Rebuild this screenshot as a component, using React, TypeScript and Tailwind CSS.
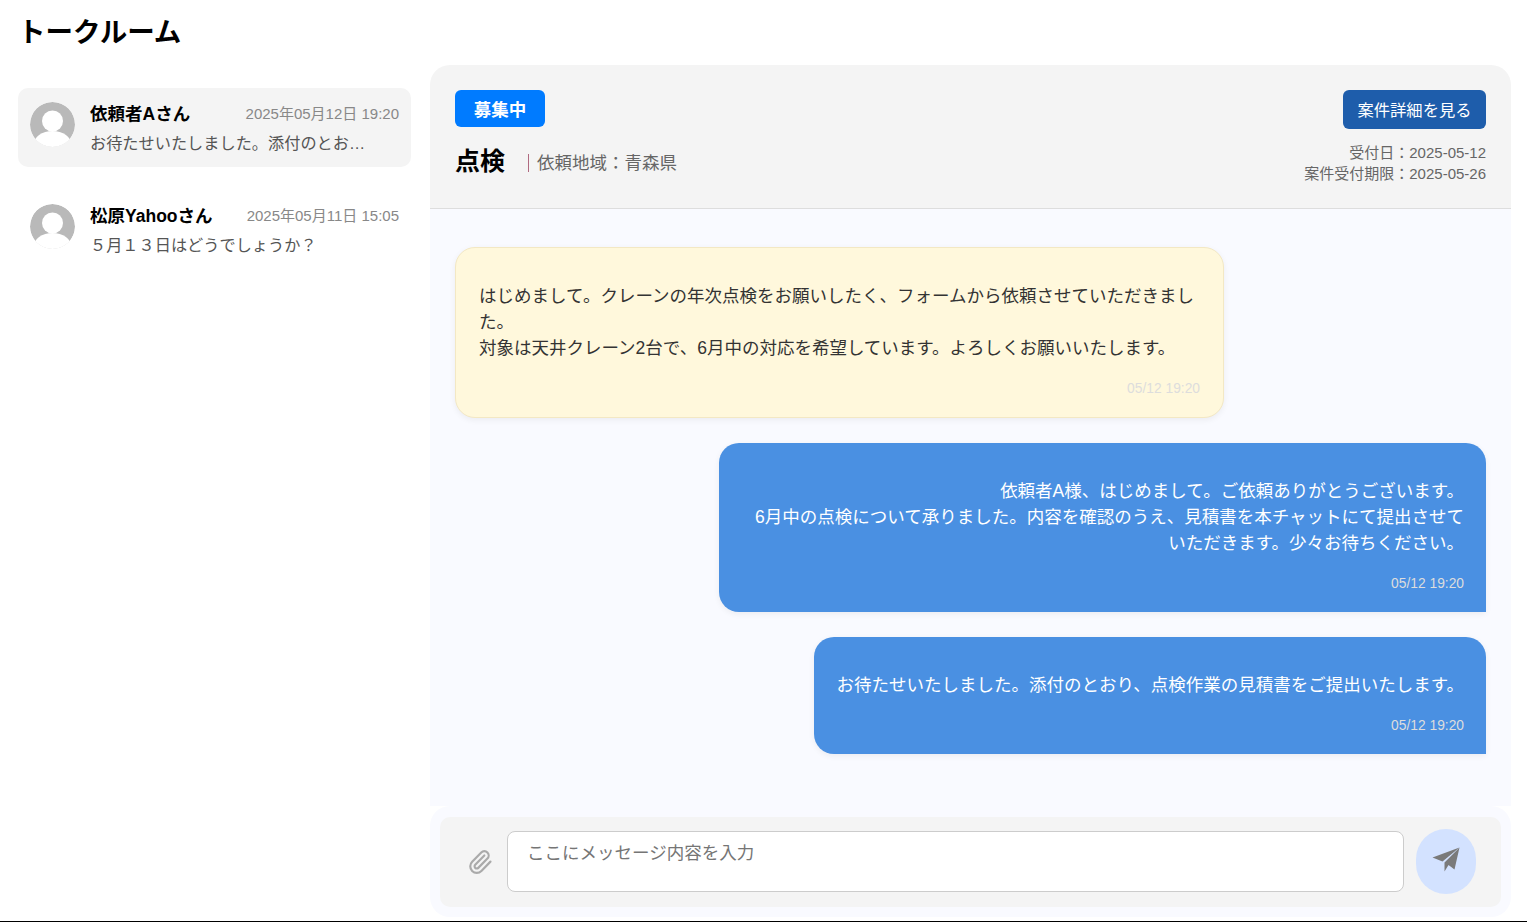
import React from 'react';
import { Paperclip } from 'lucide-react';

const rooms = [
  { name: '依頼者Aさん', date: '2025年05月12日 19:20', last: 'お待たせいたしました。添付のとおり、点検作業の見積書をご提出いたします。', active: true },
  { name: '松原Yahooさん', date: '2025年05月11日 15:05', last: '５月１３日はどうでしょうか？', active: false },
];

const Avatar = () => (
  <svg viewBox="0 0 45 45" className="w-[45px] h-[45px] mt-[1px] shrink-0 rounded-full">
    <circle cx="22.5" cy="22.5" r="22.5" fill="#b9b9b9" />
    <circle cx="22.5" cy="19" r="10.5" fill="#fff" />
    <ellipse cx="22.5" cy="43" rx="19" ry="14" fill="#fff" />
  </svg>
);

// paper plane from the send button
const SendIcon = () => (
  <svg viewBox="-1.5 0.5 45 40" className="w-[45px] h-[40px]" fill="#7a7a7a">
    <path d="M34 7 7 17l10 4z" />
    <path d="M34 7 19 22v9l4-6.5 6 4.5z" />
  </svg>
);

export default function App() {
  return (
    <div className="h-[922px] flex flex-col bg-white border-b border-black overflow-hidden font-['Liberation_Sans','Noto_Sans_CJK_JP',sans-serif]">
      <div className="flex flex-1 min-h-0">
        {/* Room list */}
        <div className="w-[430px] shrink-0 pl-[18px] pr-[19px]">
          <h1 className="h-[65px] pt-[13px] text-[27.5px] leading-[40px] font-bold text-black">トークルーム</h1>
          <div className="mt-[23px] flex flex-col gap-[23px]">
            {rooms.map((room) => (
              <div
                key={room.name}
                className={`h-[79px] flex items-start gap-[15px] px-[12px] pt-[13px] rounded-[10px] ${room.active ? 'bg-[#f4f4f4]' : ''}`}
              >
                <Avatar />
                <div className="flex-1 min-w-0">
                  <div className="flex items-center justify-between h-[26px]">
                    <span className="text-[17.5px] font-bold text-black">{room.name}</span>
                    <span className="text-[15px] text-[#888]">{room.date}</span>
                  </div>
                  <p className="mt-[4px] w-[276px] text-[16.2px] leading-[24px] text-[#555] truncate">{room.last}</p>
                </div>
              </div>
            ))}
          </div>
        </div>

        {/* Chat */}
        <div className="w-[1081px] mt-[65px] mb-[4px] flex flex-col min-h-0">
          <div className="h-[144px] shrink-0 flex justify-between px-[25px] pt-[25px] bg-[#f4f4f4] border-b border-[#dddddd] rounded-t-[20px]">
            <div>
              <span className="flex items-center justify-center w-[90px] h-[37px] pt-[3px] rounded-[6px] bg-[#007bff] text-white text-[17.5px] font-bold">募集中</span>
              <div className="flex items-center mt-[16px] h-[40px]">
                <span className="mb-[4px] text-[25px] leading-[30px] font-bold text-black">点検</span>
                <span className="ml-[23px] pl-[8px] border-l border-[#b06a80] text-[17.5px] leading-[18px] text-[#666]">依頼地域：青森県</span>
              </div>
            </div>
            <div className="flex flex-col items-end">
              <button className="w-[143px] h-[39px] pt-[2px] rounded-[6px] bg-[#1e5dab] text-white text-[16.3px]">案件詳細を見る</button>
              <div className="mt-[13px] text-right text-[15px] leading-[21px] text-[#666]">
                <p>受付日：2025-05-12</p>
                <p>案件受付期限：2025-05-26</p>
              </div>
            </div>
          </div>

          <div className="flex-1 min-h-0 flex flex-col gap-[25px] px-[25px] pt-[38px] bg-[#f9faff]">
            <div className="w-[769px] h-[171px] px-[23px] pt-[35px] rounded-[20px] bg-[#fff8dc] border border-[#f3e8c4] shadow-[0_2px_6px_rgba(0,0,0,0.06)]">
              <p className="text-[17.5px] leading-[26px] text-[#333]">
                はじめまして。クレーンの年次点検をお願いしたく、フォームから依頼させていただきました。<br />
                対象は天井クレーン2台で、6月中の対応を希望しています。よろしくお願いいたします。
              </p>
              <p className="mt-[18px] text-right text-[13.8px] leading-[20px] text-[#dddddd]">05/12 19:20</p>
            </div>
            <div className="self-end w-[767px] h-[169px] px-[22px] pt-[35px] rounded-[20px] rounded-br-none bg-[#4a90e2] shadow-[0_2px_6px_rgba(0,0,0,0.06)]">
              <p className="text-right text-[17.5px] leading-[26px] text-white">
                依頼者A様、はじめまして。ご依頼ありがとうございます。<br />
                6月中の点検について承りました。内容を確認のうえ、見積書を本チャットにて提出させていただきます。少々お待ちください。
              </p>
              <p className="mt-[18px] text-right text-[13.8px] leading-[20px] text-[#dddddd]">05/12 19:20</p>
            </div>
            <div className="self-end w-[672px] h-[117px] px-[22px] pt-[35px] rounded-[20px] rounded-br-none bg-[#4a90e2] shadow-[0_2px_6px_rgba(0,0,0,0.06)]">
              <p className="text-right text-[17.5px] leading-[26px] text-white">お待たせいたしました。添付のとおり、点検作業の見積書をご提出いたします。</p>
              <p className="mt-[18px] text-right text-[13.8px] leading-[20px] text-[#dddddd]">05/12 19:20</p>
            </div>
          </div>

          {/* Input */}
          <div className="h-[111px] shrink-0 px-[10px] pt-[11px] pb-[10px] rounded-[20px] bg-[#f9faff]">
            <div className="h-[90px] flex items-center rounded-[10px] bg-[#f4f4f4] pl-[27px] pr-[25px]">
              <Paperclip className="w-[26px] h-[26px] text-[#aaaaaa] shrink-0" strokeWidth={2} />
              <div className="ml-[14px] mb-[2px] w-[897px] h-[61px] px-[19px] pt-[9px] rounded-[8px] border border-[#cccccc] bg-white text-[17.5px] leading-[25px] text-[#757575]">ここにメッセージ内容を入力</div>
              <div className="ml-[12px] mb-[2px] w-[60px] h-[65px] flex items-center justify-center rounded-full bg-[#d3e2ff]">
                <SendIcon />
              </div>
            </div>
          </div>
        </div>
        <div className="flex-1" />
      </div>
    </div>
  );
}
